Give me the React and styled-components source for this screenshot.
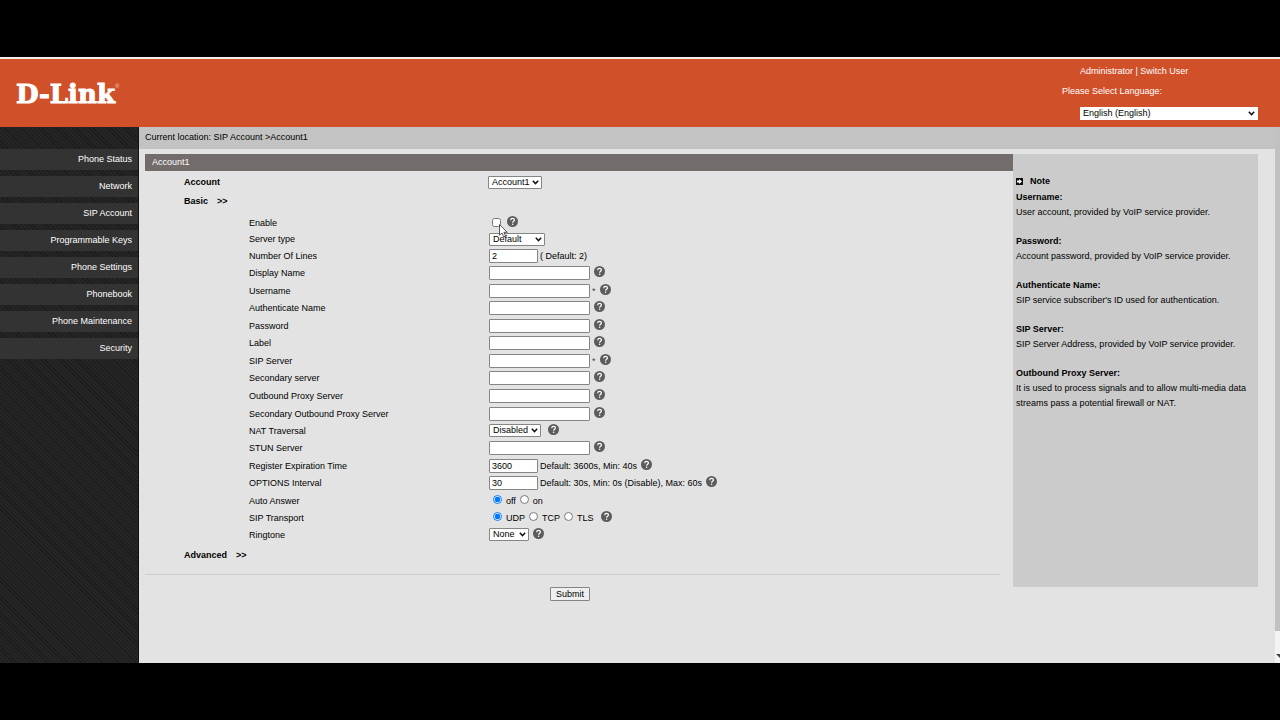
import React, { useState } from "react";
import styled, { createGlobalStyle } from "styled-components";

const menu = [
	"Phone Status",
	"Network",
	"SIP Account",
	"Programmable Keys",
	"Phone Settings",
	"Phonebook",
	"Phone Maintenance",
	"Security",
];

const fields = [
	{ id: "enable", label: "Enable", type: "checkbox", height: 17 },
	{ id: "servertype", label: "Server type", type: "select", options: ["Default"], width: 56, nohelp: true, height: 16 },
	{ id: "lines", label: "Number Of Lines", type: "text", value: "2", width: 49, hint: "( Default: 2)", nohelp: true, height: 17 },
	{ id: "display", label: "Display Name", type: "text", height: 18 },
	{ id: "username", label: "Username", type: "text", required: true, height: 17 },
	{ id: "authname", label: "Authenticate Name", type: "text", height: 18 },
	{ id: "password", label: "Password", type: "password", height: 17 },
	{ id: "label", label: "Label", type: "text", height: 18 },
	{ id: "sipserver", label: "SIP Server", type: "text", required: true, height: 17 },
	{ id: "secondary", label: "Secondary server", type: "text", height: 18 },
	{ id: "outbound", label: "Outbound Proxy Server", type: "text", height: 18 },
	{ id: "outbound2", label: "Secondary Outbound Proxy Server", type: "text", height: 17 },
	{ id: "nat", label: "NAT Traversal", type: "select", options: ["Disabled"], width: 52, gap: 7, height: 17 },
	{ id: "stun", label: "STUN Server", type: "text", height: 18 },
	{ id: "expire", label: "Register Expiration Time", type: "text", value: "3600", width: 49, hint: "Default: 3600s, Min: 40s", height: 17 },
	{ id: "options", label: "OPTIONS Interval", type: "text", value: "30", width: 49, hint: "Default: 30s, Min: 0s (Disable), Max: 60s", height: 18 },
	{ id: "answer", label: "Auto Answer", type: "radio", options: ["off", "on"], nohelp: true, height: 17 },
	{ id: "transport", label: "SIP Transport", type: "radio", options: ["UDP", "TCP", "TLS"], gap: 7, height: 17 },
	{ id: "ringtone", label: "Ringtone", type: "select", options: ["None"], width: 40, height: 17 },
];

const notes = [
	["Username:", "User account, provided by VoIP service provider."],
	["Password:", "Account password, provided by VoIP service provider."],
	["Authenticate Name:", "SIP service subscriber's ID used for authentication."],
	["SIP Server:", "SIP Server Address, provided by VoIP service provider."],
	[
		"Outbound Proxy Server:",
		"It is used to process signals and to allow multi-media data streams pass a potential firewall or NAT.",
	],
];

function Select({ id, options, width, plain }) {
	return (
		<StyledSelectWrap $width={width}>
			<StyledSelect id={id} $plain={plain}>
				{options.map((o) => (
					<option key={o}>{o}</option>
				))}
			</StyledSelect>
			<StyledChevron viewBox="0 0 7 5">
				<path d="M0.8 0.8 L3.5 3.6 L6.2 0.8" fill="none" stroke="#111" strokeWidth="1.5" />
			</StyledChevron>
		</StyledSelectWrap>
	);
}

function Radios({ id, label, options }) {
	const [picked, setPicked] = useState(options[0]);

	return (
		<StyledRadios role="radiogroup" aria-label={label}>
			{options.map((o) => (
				<StyledRadioLabel key={o}>
					<StyledTick type="radio" name={id} checked={picked === o} onChange={() => setPicked(o)} />
					<StyledRadioText>{o}</StyledRadioText>
				</StyledRadioLabel>
			))}
		</StyledRadios>
	);
}

function Help({ gap }) {
	return (
		<StyledHelp $gap={gap} viewBox="0 0 22 22">
			<circle cx="11" cy="11" r="11" fill="#5c5c5c" />
			<path
				d="M7.4 8.4 C7.4 3.6 14.8 3.8 14.8 8 C14.8 10.6 11.2 10.6 11.2 13.6"
				fill="none"
				stroke="#fff"
				strokeWidth="2.4"
			/>
			<circle cx="11.2" cy="16.6" r="1.5" fill="#fff" />
		</StyledHelp>
	);
}

function Field({ field }) {
	const { id, label, type, value, width, hint, options, required, nohelp, gap, height } = field;

	return (
		<StyledField $height={height}>
			{type === "radio" ? <span>{label}</span> : <label htmlFor={id}>{label}</label>}
			<StyledControl>
				{type === "checkbox" && (
					<StyledCheckWrap>
						<StyledTick id={id} type="checkbox" />
						<StyledPointer viewBox="0 0 9 14">
							<path
								d="M0.5 0.5 V11.2 L3 9 L4.7 12.9 L6.5 12.1 L4.9 8.3 H8.3 Z"
								fill="#fff"
								stroke="#333"
								strokeWidth="0.8"
							/>
						</StyledPointer>
					</StyledCheckWrap>
				)}
				{type === "select" && <Select id={id} options={options} width={width} />}
				{(type === "text" || type === "password") && (
					<StyledInput id={id} type={type} defaultValue={value} $width={width} />
				)}
				{type === "radio" && <Radios id={id} label={label} options={options} />}
				{hint && <StyledHint>{hint}</StyledHint>}
				{required && <StyledStar>*</StyledStar>}
				{!nohelp && <Help gap={gap} />}
			</StyledControl>
		</StyledField>
	);
}

function App() {
	return (
		<StyledPage>
			<GlobalStyle />
			<StyledHeader>
				<StyledLogo>
					D-Link<StyledReg>®</StyledReg>
				</StyledLogo>
				<StyledUser>
					<StyledUserLine $indent>
						<a href="#admin">Administrator</a> | <a href="#switch">Switch User</a>
					</StyledUserLine>
					<StyledUserLine as="label" htmlFor="language">
						Please Select Language:
					</StyledUserLine>
					<StyledLanguage>
						<Select id="language" options={["English (English)"]} width={178} plain />
					</StyledLanguage>
				</StyledUser>
			</StyledHeader>

			<StyledBody>
				<StyledSidebar>
					{menu.map((item) => (
						<StyledMenuLink key={item} href="#menu">
							{item}
						</StyledMenuLink>
					))}
				</StyledSidebar>

				<StyledContent>
					<StyledLocation>Current location: SIP Account &gt;Account1</StyledLocation>
					<StyledColumns>
						<StyledForm onSubmit={(e) => e.preventDefault()}>
							<StyledTitle>Account1</StyledTitle>
							<StyledAccountRow>
								<label htmlFor="account">Account</label>
								<Select id="account" options={["Account1"]} width={54} />
							</StyledAccountRow>
							<StyledSection>
								<span>Basic</span>
								<span>&gt;&gt;</span>
							</StyledSection>
							<StyledFields>
								{fields.map((field) => (
									<Field key={field.id} field={field} />
								))}
							</StyledFields>
							<StyledSection>
								<span>Advanced</span>
								<span>&gt;&gt;</span>
							</StyledSection>
							<StyledFooter>
								<StyledSubmit>Submit</StyledSubmit>
							</StyledFooter>
						</StyledForm>

						<StyledNotes>
							<StyledNoteHead>
								<svg width="7" height="7" viewBox="0 0 7 7">
									<rect width="7" height="7" fill="#111" />
									<path d="M1 2.5 H3.2 V1.1 L6 3.5 L3.2 5.9 V4.5 H1 Z" fill="#fff" />
								</svg>
								Note
							</StyledNoteHead>
							{notes.map(([title, text]) => (
								<StyledNote key={title}>
									<b>{title}</b>
									<p>{text}</p>
								</StyledNote>
							))}
						</StyledNotes>
					</StyledColumns>
				</StyledContent>

				<StyledScrollbar>
					<StyledThumb />
					<StyledArrow viewBox="0 0 5 5">
						<path d="M1 1 H5 V5 Z" fill="#444" />
					</StyledArrow>
				</StyledScrollbar>
			</StyledBody>
		</StyledPage>
	);
}

const GlobalStyle = createGlobalStyle`
	* {
		box-sizing: border-box;
	}
	body {
		margin: 0;
		background: #000;
		color: #000;
		font: 9px/12px "Liberation Sans", Arial, sans-serif;
	}
	p {
		margin: 0;
	}
	a {
		color: inherit;
		text-decoration: none;
	}
`;
const StyledPage = styled.div`
	display: flex;
	flex-direction: column;
	min-height: 100vh;
	padding: 57px 0;
`;
const StyledHeader = styled.header`
	display: flex;
	justify-content: space-between;
	height: 70px;
	padding: 6px 22px 0 16px;
	border-top: 2px solid #f6efec;
	background: #d0502a;
	color: #fff;
`;
const StyledLogo = styled.div`
	display: flex;
	padding-top: 13px;
	font: bold 26px/32px "DejaVu Serif", serif;
	-webkit-text-stroke: 1px #fff;
`;
const StyledReg = styled.span`
	color: #f3c9bb;
	font: 6px/16px "Liberation Sans", sans-serif;
	-webkit-text-stroke: 0;
`;
const StyledUser = styled.div`
	display: flex;
	flex-direction: column;
	gap: 8px;
	width: 196px;
`;
const StyledUserLine = styled.div`
	padding-left: ${(props) => (props.$indent ? "18px" : "0")};
`;
const StyledLanguage = styled.div`
	padding: 2px 0 0 18px;
`;
const StyledSelectWrap = styled.div`
	display: grid;
	align-items: center;
	width: ${(props) => props.$width}px;
`;
const StyledSelect = styled.select`
	grid-area: 1 / 1;
	appearance: none;
	width: 100%;
	height: 13px;
	padding: 0 3px;
	border: ${(props) => (props.$plain ? "0" : "1px solid #858585")};
	border-radius: ${(props) => (props.$plain ? "0" : "1px")};
	background: #fff;
	color: #000;
	font: inherit;
	line-height: 11px;
`;
const StyledChevron = styled.svg`
	grid-area: 1 / 1;
	justify-self: end;
	width: 7px;
	height: 5px;
	margin-right: 3px;
	pointer-events: none;
`;
const StyledBody = styled.div`
	display: flex;
	flex: 1;
	background: #e3e3e3;
`;
const StyledSidebar = styled.nav`
	display: flex;
	flex-direction: column;
	gap: 6px;
	width: 139px;
	padding-top: 22px;
	border-right: 1px solid #111;
	background: repeating-linear-gradient(45deg, #1c1c1c 0 1px, #252525 1px 3px);
`;
const StyledMenuLink = styled.a`
	height: 21px;
	padding-right: 6px;
	background: #333;
	color: #fff;
	line-height: 20px;
	text-align: right;
`;
const StyledContent = styled.main`
	flex: 1;
`;
const StyledLocation = styled.div`
	height: 22px;
	padding-left: 6px;
	background: #c3c3c3;
	line-height: 20px;
`;
const StyledColumns = styled.div`
	display: flex;
	align-items: flex-start;
	padding: 5px 17px 0 6px;
`;
const StyledForm = styled.form`
	flex: 1;
`;
const StyledTitle = styled.div`
	height: 17px;
	padding-left: 7px;
	background: #726d6b;
	color: #fff;
	line-height: 17px;
`;
const StyledAccountRow = styled.div`
	display: grid;
	grid-template-columns: 304px 1fr;
	padding: 5px 0 0 39px;
	font-weight: bold;

	select {
		font-weight: normal;
	}
`;
const StyledSection = styled.div`
	display: flex;
	gap: 9px;
	padding: 6px 0 0 39px;
	font-weight: bold;
`;
const StyledFields = styled.div`
	padding: 7px 0 0 104px;
`;
const StyledField = styled.div`
	display: grid;
	grid-template-columns: 240px 1fr;
	align-items: center;
	height: ${(props) => props.$height}px;
`;
const StyledControl = styled.div`
	display: flex;
	align-items: center;
`;
const StyledInput = styled.input`
	width: ${(props) => props.$width || 101}px;
	height: 14px;
	padding: 0 2px;
	border: 1px solid #858585;
	border-radius: 1px;
	background: #fff;
	color: #000;
	font: inherit;
`;
const StyledTick = styled.input`
	width: 9px;
	height: 9px;
	margin: 0;
`;
const StyledCheckWrap = styled.div`
	display: flex;
	position: relative;
	padding: 0 2px 0 3px;
`;
const StyledPointer = styled.svg`
	position: absolute;
	z-index: 1;
	top: 6px;
	left: 10px;
	width: 9px;
	height: 14px;
	pointer-events: none;
`;
const StyledRadios = styled.div`
	display: flex;
	gap: 4px;
	padding-left: 4px;
`;
const StyledRadioLabel = styled.label`
	display: flex;
	gap: 4px;
`;
const StyledRadioText = styled.span`
	line-height: 12px;
`;
const StyledHint = styled.span`
	padding-left: 2px;
`;
const StyledStar = styled.span`
	padding-left: 2px;
	color: #444;
`;
const StyledHelp = styled.svg`
	width: 11px;
	height: 11px;
	margin: 0 0 3px ${(props) => props.$gap || 4}px;
`;
const StyledFooter = styled.div`
	display: flex;
	justify-content: center;
	margin: 13px 13px 0 0;
	padding: 12px 5px 0 0;
	border-top: 1px solid #ccc;
`;
const StyledSubmit = styled.button`
	height: 14px;
	padding: 0 5px;
	border: 1px solid #858585;
	border-radius: 1px;
	background: #efefef;
	color: #000;
	font: inherit;
`;
const StyledNotes = styled.aside`
	width: 245px;
	min-height: 433px;
	padding: 20px 3px 0;
	background: #cbcbcb;
	line-height: 15px;
`;
const StyledNoteHead = styled.div`
	display: flex;
	align-items: center;
	gap: 7px;
	margin-bottom: 1px;
	font-weight: bold;
`;
const StyledNote = styled.div`
	margin-bottom: 14px;
`;
const StyledScrollbar = styled.div`
	display: flex;
	flex-direction: column;
	width: 5px;
	background: #f3f3f3;
`;
const StyledThumb = styled.div`
	flex: 1;
	background: #c1c1c1;
`;
const StyledArrow = styled.svg`
	width: 5px;
	height: 5px;
	margin: 22px 0 5px;
`;

export default App;
